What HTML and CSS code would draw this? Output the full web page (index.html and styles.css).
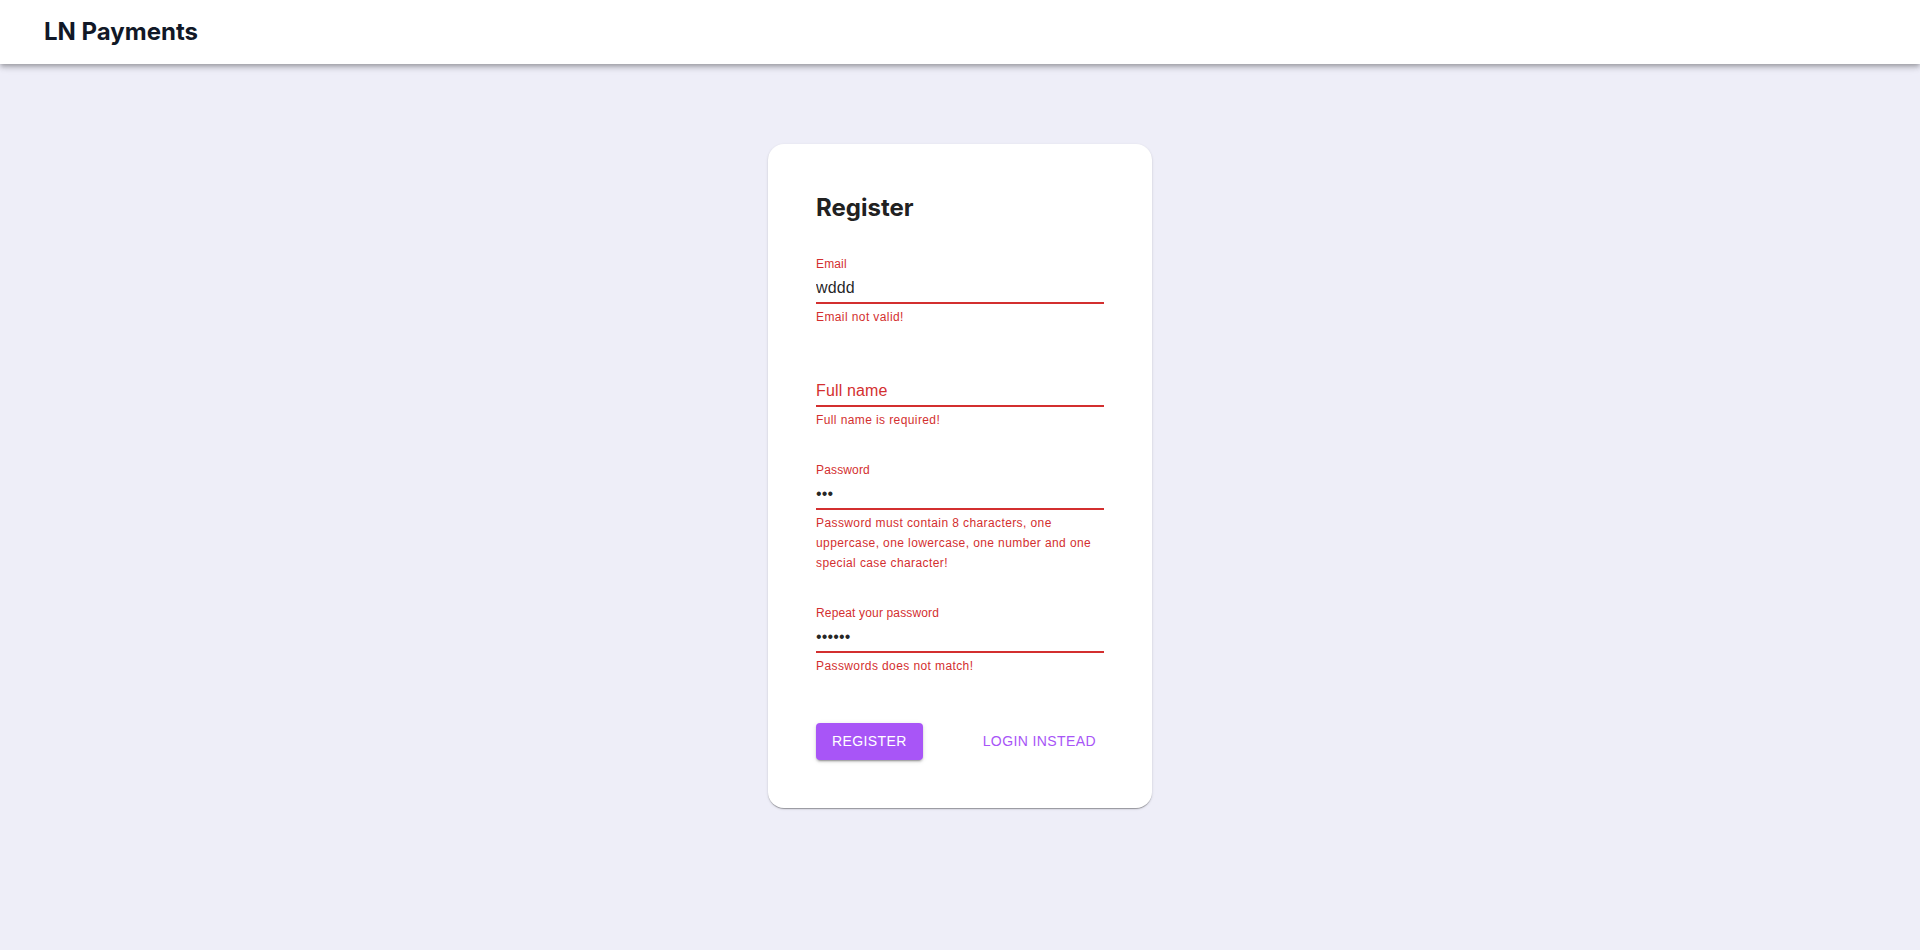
FILE: index.html
```html
<!DOCTYPE html>
<html lang="en">
<head>
<meta charset="utf-8">
<title>LN Payments</title>
<link rel="stylesheet" href="styles.css">
</head>
<body>
<header class="appbar">
  <div class="brand">LN Payments</div>
</header>
<main class="page">
  <form class="card" onsubmit="return false">
    <h1 class="card-title">Register</h1>
    <div class="fields">
      <div class="field">
        <label class="label shrunk" for="email">Email</label>
        <input class="input" id="email" type="text" value="wddd">
        <p class="helper">Email not valid!</p>
      </div>
      <div class="field">
        <label class="label floating" for="fullname">Full name</label>
        <input class="input" id="fullname" type="text" value="">
        <p class="helper">Full name is required!</p>
      </div>
      <div class="field">
        <label class="label shrunk" for="password">Password</label>
        <input class="input" id="password" type="password" value="abc">
        <p class="helper">Password must contain 8 characters, one uppercase, one lowercase, one number and one special case character!</p>
      </div>
      <div class="field">
        <label class="label shrunk" for="repeat">Repeat your password</label>
        <input class="input" id="repeat" type="password" value="abcdef">
        <p class="helper">Passwords does not match!</p>
      </div>
    </div>
    <div class="actions">
      <button class="btn btn-contained" type="submit">Register</button>
      <button class="btn btn-text" type="button">Login instead</button>
    </div>
  </form>
</main>
</body>
</html>
```

FILE: styles.css
```css
* { box-sizing: border-box; }

html, body {
  margin: 0;
  padding: 0;
}

body {
  background: #eeeef8;
  min-height: 950px;
  font-family: "Liberation Sans", Arial, sans-serif;
}

.appbar {
  height: 64px;
  background: #ffffff;
  display: flex;
  align-items: center;
  padding-left: 44px;
  box-shadow: 0px 2px 4px -1px rgba(0,0,0,0.2), 0px 4px 5px 0px rgba(0,0,0,0.14), 0px 1px 10px 0px rgba(0,0,0,0.12);
  position: relative;
  z-index: 1;
}

.brand {
  font-family: Inter, "Noto Sans", sans-serif;
  font-weight: 700;
  font-size: 24px;
  line-height: 32px;
  color: #111827;
}

.page {
  display: flex;
  justify-content: center;
  padding-top: 80px;
}

.card {
  width: 384px;
  background: #ffffff;
  border-radius: 16px;
  padding: 48px;
  display: flex;
  flex-direction: column;
  box-shadow: 0px 2px 1px -1px rgba(0,0,0,0.2), 0px 1px 1px 0px rgba(0,0,0,0.14), 0px 1px 3px 0px rgba(0,0,0,0.12);
}

.card-title {
  margin: 0 0 32px 0;
  font-family: Inter, "Noto Sans", sans-serif;
  font-weight: 700;
  font-size: 24px;
  line-height: 32px;
  color: #212121;
}

.fields {
  display: flex;
  flex-direction: column;
  gap: 32px;
}

.field {
  position: relative;
  display: flex;
  flex-direction: column;
}

.label {
  position: absolute;
  left: 0;
  color: #d32f2f;
  font-family: "Liberation Sans", Arial, sans-serif;
  letter-spacing: 0.15px;
  pointer-events: none;
}

.label.shrunk {
  top: 0;
  font-size: 12px;
  line-height: 16px;
}

.label.floating {
  top: 20px;
  font-size: 16px;
  line-height: 23px;
}

.input {
  margin-top: 16px;
  height: 32px;
  width: 100%;
  padding: 4px 0 3px 0;
  border: none;
  border-bottom: 2px solid #d32f2f;
  background: transparent;
  outline: none;
  font-family: "Liberation Sans", Arial, sans-serif;
  font-size: 16px;
  line-height: 23px;
  color: rgba(0,0,0,0.87);
  letter-spacing: 0.15px;
}

.helper {
  margin: 3px 0 0 0;
  font-size: 12px;
  line-height: 20px;
  letter-spacing: 0.4px;
  color: #d32f2f;
}

.actions {
  margin-top: 47px;
  display: flex;
  justify-content: space-between;
  align-items: center;
}

.btn {
  font-family: "Liberation Sans", Arial, sans-serif;
  font-size: 14px;
  line-height: 24.5px;
  letter-spacing: 0.4px;
  text-transform: uppercase;
  border: none;
  border-radius: 4px;
  cursor: pointer;
}

.btn-contained {
  background: #a855f7;
  color: #ffffff;
  padding: 6px 16px;
  box-shadow: 0px 3px 1px -2px rgba(0,0,0,0.2), 0px 2px 2px 0px rgba(0,0,0,0.14), 0px 1px 5px 0px rgba(0,0,0,0.12);
}

.btn-text {
  background: transparent;
  color: #a855f7;
  padding: 6px 8px;
}
```
